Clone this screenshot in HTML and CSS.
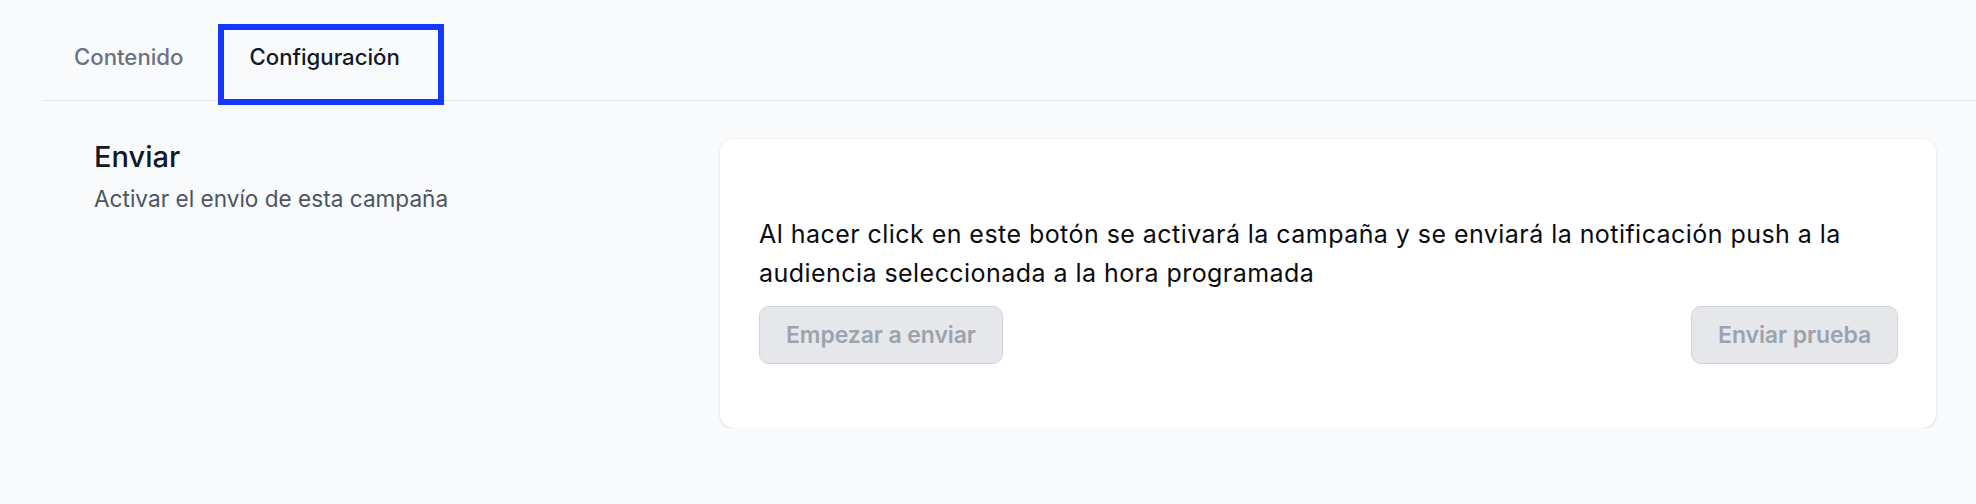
FILE: index.html
```html
<!DOCTYPE html>
<html lang="es">
<head>
<meta charset="utf-8">
<title>Campaña</title>
<link rel="stylesheet" href="styles.css">
</head>
<body>
  <nav class="tabs">
    <a class="tab">Contenido</a>
    <a class="tab tab-active">Configuración</a>
  </nav>
  <main class="section">
    <div class="section-info">
      <h2 class="section-title">Enviar</h2>
      <p class="section-desc">Activar el envío de esta campaña</p>
    </div>
    <div class="card">
      <p class="card-text">Al hacer click en este botón se activará la campaña y se enviará la notificación push a la audiencia seleccionada a la hora programada</p>
      <div class="card-actions">
        <button class="btn" disabled>Empezar a enviar</button>
        <button class="btn" disabled>Enviar prueba</button>
      </div>
    </div>
  </main>
</body>
</html>
```

FILE: styles.css
```css
* { box-sizing: border-box; }

html, body {
  margin: 0;
  padding: 0;
  background: #f9fafb;
  font-family: "Inter", "Liberation Sans", sans-serif;
  color: #111827;
}

.tabs {
  display: flex;
  align-items: flex-start;
  gap: 3px;
  margin-left: 42px;
  padding-top: 24px;
  border-bottom: 1px solid #e5e7eb;
}

.tab {
  display: block;
  height: 81px;
  margin-bottom: -5px;
  padding: 17px 32px 0;
  font-size: 22.2px;
  line-height: 32px;
  font-weight: 500;
  color: #6b7280;
  text-decoration: none;
}

.tab-active {
  padding: 17px 44px 0 31px;
  color: #111827;
  outline: 6px solid #1637ff;
  outline-offset: -6px;
}

.section {
  display: flex;
  align-items: flex-start;
  padding: 38px 40px 0 94px;
}

.section-info {
  width: 626px;
  flex: none;
}

.section-title {
  margin: 0;
  font-size: 29px;
  line-height: 36px;
  font-weight: 500;
  color: #111827;
}

.section-desc {
  margin: 8px 0 0;
  font-size: 22.6px;
  line-height: 32px;
  color: #4b5563;
}

.card {
  flex: 1;
  height: 289px;
  background: #ffffff;
  border-radius: 14px;
  box-shadow: 0 1px 3px rgba(0, 0, 0, 0.1), 0 1px 2px rgba(0, 0, 0, 0.06);
  padding: 76px 38px 0 39px;
}

.card-text {
  margin: 0;
  font-size: 25px;
  line-height: 39px;
  letter-spacing: 0.45px;
  color: #0b0b0f;
}

.card-actions {
  display: flex;
  justify-content: space-between;
  margin-top: 13px;
}

.btn {
  height: 58px;
  padding: 0 26px;
  font-family: "Inter", "Liberation Sans", sans-serif;
  font-size: 23px;
  font-weight: 600;
  letter-spacing: -0.1px;
  color: #9ca3af;
  background: #e5e7eb;
  border: 1px solid #d1d5db;
  border-radius: 10px;
}
```
